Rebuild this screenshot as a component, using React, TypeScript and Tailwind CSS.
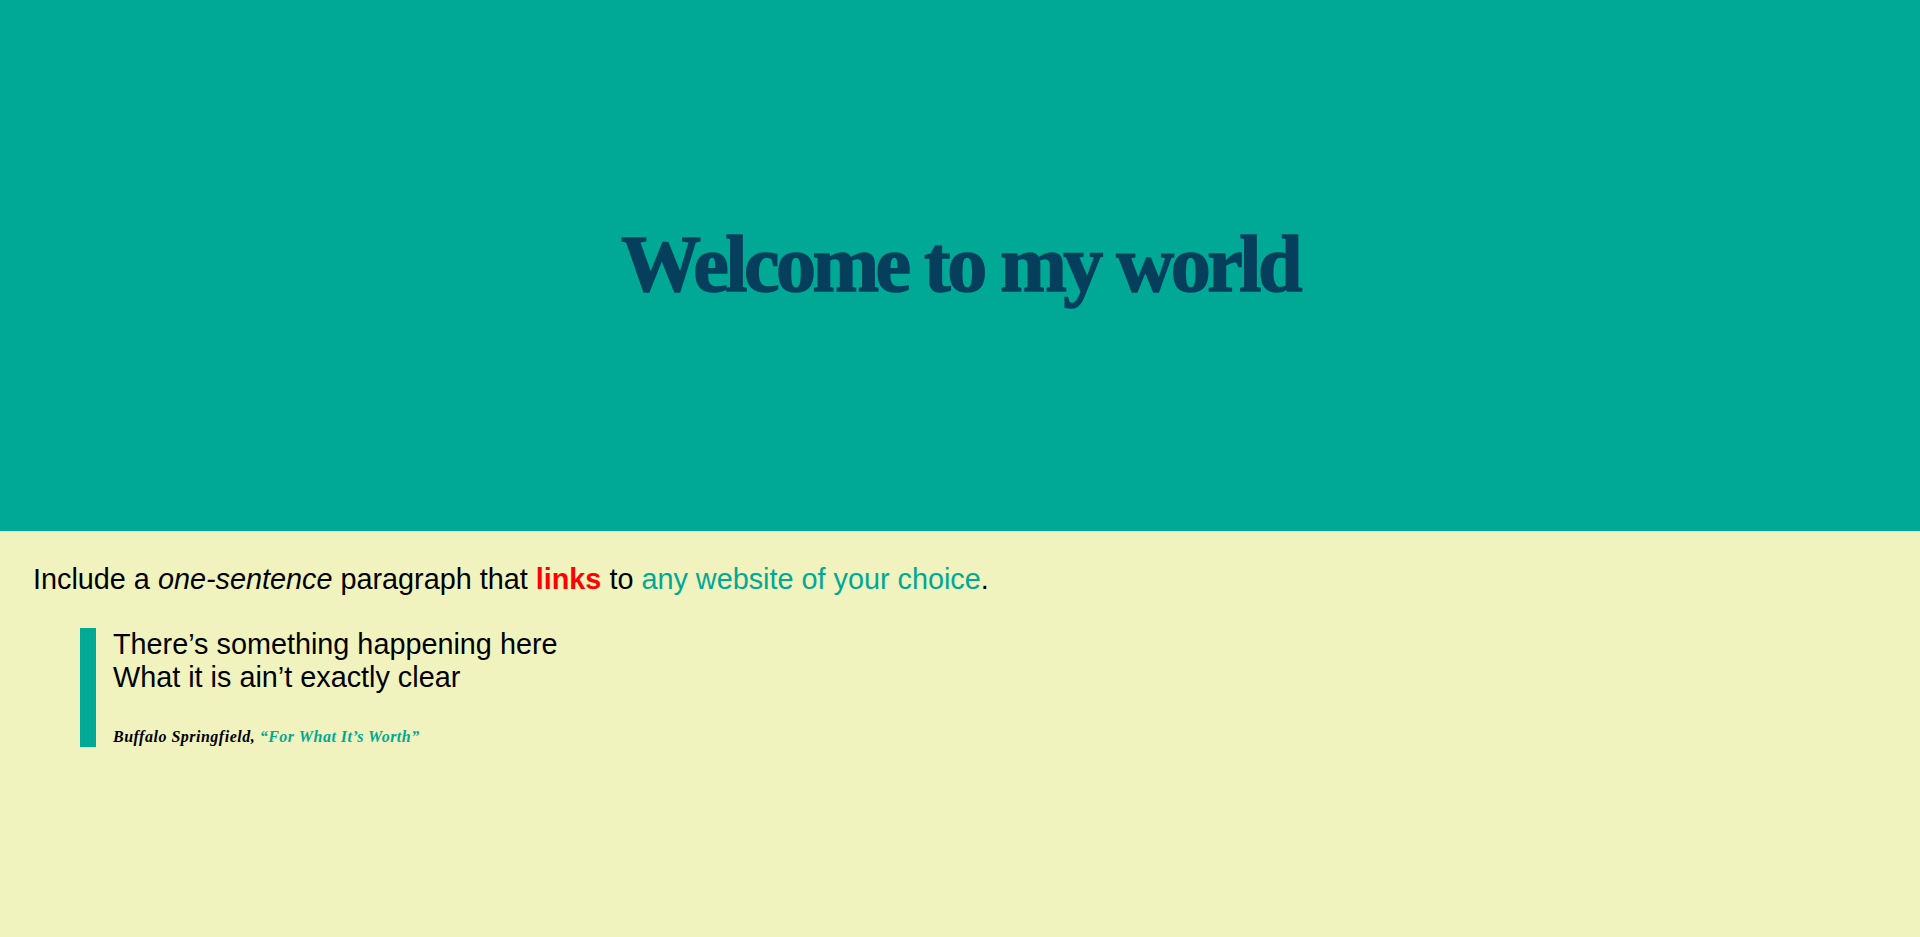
import React from "react";

const App: React.FC = () => {
  return (
    <div className="min-h-screen bg-[#f0f3bd] font-['Liberation_Sans',Arial,sans-serif] text-black">
      <header className="h-[531px] bg-[#00a896] flex items-center justify-center">
        <h1 className="font-['Liberation_Serif',serif] font-bold text-[80px] leading-none tracking-[-3.5px] text-[#053f5c] [-webkit-text-stroke:1.5px_#053f5c] pb-[3px]">
          Welcome to my world
        </h1>
      </header>
      <main className="px-[33px] pt-[32px] pb-10">
        <p className="text-[28.8px] leading-[33px]">
          Include a <em>one-sentence</em> paragraph that{" "}
          <a href="#" className="font-bold text-[#ff0000]">
            links
          </a>{" "}
          to{" "}
          <a href="#" className="text-[#00a896]">
            any website of your choice
          </a>
          .
        </p>
        <blockquote className="ml-[47px] mt-[32px] border-l-[16px] border-[#00a896] pl-[17px]">
          <p className="text-[28.8px] leading-[33px]">
            There’s something happening here
            <br />
            What it is ain’t exactly clear
          </p>
          <p className="mt-[33px] font-['Liberation_Serif',serif] italic font-bold text-[16px] leading-[20px] tracking-[0.5px]">
            Buffalo Springfield,{" "}
            <cite className="text-[#00a896]">“For What It’s Worth”</cite>
          </p>
        </blockquote>
      </main>
    </div>
  );
};

export default App;
